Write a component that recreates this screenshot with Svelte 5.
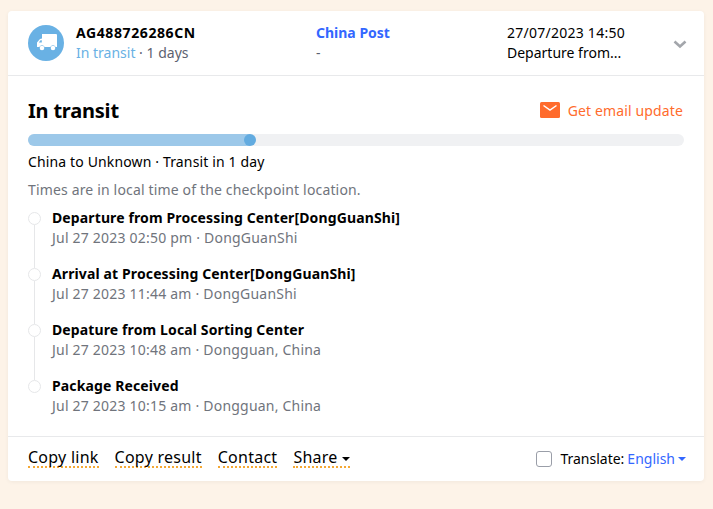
<script lang="ts">
	const events = [
		{ title: 'Departure from Processing Center[DongGuanShi]', meta: 'Jul 27 2023 02:50 pm · DongGuanShi' },
		{ title: 'Arrival at Processing Center[DongGuanShi]', meta: 'Jul 27 2023 11:44 am · DongGuanShi' },
		{ title: 'Depature from Local Sorting Center', meta: 'Jul 27 2023 10:48 am · Dongguan, China' },
		{ title: 'Package Received', meta: 'Jul 27 2023 10:15 am · Dongguan, China' }
	];
</script>

<main class="page">
	<section class="card">
		<header class="head">
			<span class="avatar">
				<svg class="truck" width="20" height="17" viewBox="0 0 20 17">
					<path fill="#fff" fill-rule="evenodd" d="M5 0h14a1 1 0 0 1 1 1v12h-1.300a3 3 0 0 0-5.400 0H7.700a3 3 0 0 0-5.400 0H0V8.500L3 5l2-.5zM1.800 8.500h3V6.200H3.600z" />
					<circle cx="5" cy="14" r="2.300" fill="#fff" />
					<circle cx="16" cy="14" r="2.300" fill="#fff" />
				</svg>
			</span>
			<div class="col number">
				<strong class="code">AG488726286CN</strong>
				<span class="sub"><span class="state">In transit</span> · 1 days</span>
			</div>
			<div class="col carrier">
				<strong class="link">China Post</strong>
				<span class="sub">-</span>
			</div>
			<div class="col latest">
				<span class="date">27/07/2023 14:50</span>
				<span>Departure from...</span>
			</div>
			<svg class="chevron" width="14" height="9" viewBox="0 0 14 9">
				<path d="M1.500 1.500 7 6.500l5.500-5" fill="none" stroke="#a3a6ab" stroke-width="2.600" />
			</svg>
		</header>

		<div class="body">
			<div class="status">
				<h2>In transit</h2>
				<span class="email">
					<svg width="20" height="16" viewBox="0 0 20 16">
						<rect width="20" height="16" rx="1.500" fill="#ff6b2c" />
						<path d="M3.500 3.500 10 8l6.500-4.500" fill="none" stroke="#fff" stroke-width="1.500" />
					</svg>
					Get email update
				</span>
			</div>
			<div class="track">
				<div class="fill"></div>
				<div class="dot"></div>
			</div>
			<p class="route">China to Unknown · Transit in 1 day</p>
			<p class="note">Times are in local time of the checkpoint location.</p>
			<ul class="events">
				{#each events as event}
					<li>
						<b>{event.title}</b>
						<span>{event.meta}</span>
					</li>
				{/each}
			</ul>
		</div>

		<footer class="foot">
			<span class="action">Copy link</span>
			<span class="action">Copy result</span>
			<span class="action">Contact</span>
			<span class="action">Share <i class="caret"></i></span>
			<label class="translate">
				<span class="box"></span>
				Translate: <span class="lang">English</span><i class="caret blue"></i>
			</label>
		</footer>
	</section>
</main>

<style>
	:global(body) {
		background: #fdf3e8;
	}

	.page {
		padding: 11px 9px 28px 8px;
		font-family: 'Noto Sans', 'Open Sans', sans-serif;
		font-size: 14px;
		color: #000;
	}

	.card {
		background: #fff;
		border-radius: 4px;
		box-shadow: 0 1px 4px rgba(0, 0, 0, 0.05);
	}

	.head {
		display: flex;
		align-items: center;
		height: 64px;
		padding-left: 20px;
		border-bottom: 1px solid #e8e9eb;
	}

	.avatar {
		display: flex;
		align-items: center;
		justify-content: center;
		width: 36px;
		height: 36px;
		margin-right: 12px;
		border-radius: 50%;
		background: #69b1e4;
	}

	.truck {
		margin: -1px 0 0 1px;
	}

	.col {
		display: flex;
		flex-direction: column;
		line-height: 20px;
	}

	.number {
		width: 240px;
	}

	.carrier {
		width: 191px;
	}

	.latest {
		width: 166px;
	}

	.col strong {
		font-weight: 700;
	}

	.code {
		letter-spacing: 0.6px;
	}

	.date {
		letter-spacing: 0.25px;
	}

	.sub {
		color: #5c6270;
	}

	.state {
		color: #69b1e4;
	}

	.link {
		color: #3367ff;
	}

	.chevron {
		margin-top: 3px;
	}

	.body {
		padding: 21px 20px 0;
	}

	.status {
		display: flex;
		align-items: center;
		justify-content: space-between;
		height: 28px;
	}

	h2 {
		margin: 0;
		font-size: 20px;
		font-weight: 700;
		line-height: 28px;
		letter-spacing: -0.2px;
	}

	.email {
		display: flex;
		align-items: center;
		gap: 8px;
		margin: 0 1px 2px 0;
		letter-spacing: 0.13px;
		color: #ff6b2c;
	}

	.track {
		position: relative;
		height: 12px;
		margin-top: 9px;
		border-radius: 6px;
		background: #f0f1f3;
	}

	.fill {
		width: 222px;
		height: 12px;
		border-radius: 6px 0 0 6px;
		background: #9cc8e9;
	}

	.dot {
		position: absolute;
		top: 0;
		left: 216px;
		width: 12px;
		height: 12px;
		border-radius: 50%;
		background: #62abe0;
	}

	.route {
		margin: 6px 0 0;
		line-height: 20px;
		letter-spacing: 0.14px;
	}

	.note {
		margin: 8px 0 0;
		line-height: 20px;
		letter-spacing: 0.16px;
		color: #70747c;
	}

	.events {
		margin: 8px 0 0;
		padding: 0;
		list-style: none;
	}

	li {
		position: relative;
		display: flex;
		flex-direction: column;
		height: 56px;
		padding-left: 24px;
		line-height: 20px;
	}

	li:last-child {
		height: 60px;
	}

	li b {
		font-weight: 700;
		letter-spacing: 0.12px;
	}

	li span {
		letter-spacing: 0.21px;
		color: #70747c;
	}

	li::before {
		content: '';
		position: absolute;
		left: 0;
		top: 4px;
		width: 11px;
		height: 11px;
		border: 1px solid #e6e7e9;
		border-radius: 50%;
		background: #fff;
	}

	li:not(:last-child)::after {
		content: '';
		position: absolute;
		left: 6px;
		top: 17px;
		bottom: -4px;
		width: 1px;
		background: #e6e7e9;
	}

	.foot {
		display: flex;
		align-items: center;
		gap: 16px;
		height: 43px;
		padding: 0 18px 1px 20px;
		border-top: 1px solid #e8e9eb;
		font-size: 16px;
	}

	.action {
		line-height: 17px;
		letter-spacing: 0.25px;
		border-bottom: 2px dotted #f5a833;
	}

	.caret {
		display: inline-block;
		vertical-align: middle;
		border: 4px solid transparent;
		border-top-color: #000;
		border-bottom-width: 0;
	}

	.caret.blue {
		border-top-color: #3367ff;
	}

	.translate {
		display: flex;
		align-items: center;
		gap: 3px;
		margin-left: auto;
		font-size: 14px;
	}

	.box {
		width: 14px;
		height: 14px;
		margin-right: 5px;
		border: 1px solid #9a9ea8;
		border-radius: 3px;
	}

	.lang {
		color: #3367ff;
	}
</style>
